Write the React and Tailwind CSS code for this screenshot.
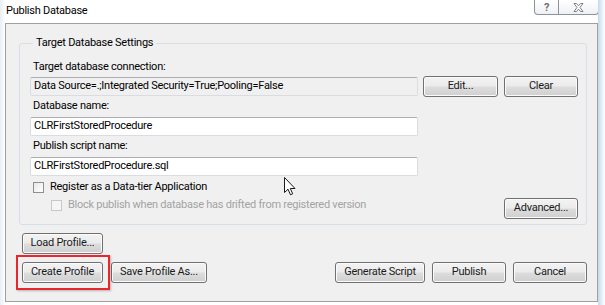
import React from 'react';

const Btn = ({ children, className = '' }) => (
  <div
    className={`flex items-center justify-center h-[21px] rounded-[3px] border border-[#707070] bg-[linear-gradient(#f3f3f3_0%,#ebebeb_48%,#dddddd_52%,#cfcfcf_100%)] shadow-[inset_0_0_0_1px_#fbfbfb] text-[11px] text-[#1b1b1b] ${className}`}
  >
    {children}
  </div>
);

const Field = ({ children, readOnly = false, className = '' }) => (
  <div
    className={`flex items-center h-[19px] pl-[3px] border border-[#d9dde3] border-t-[#abadb3] rounded-[2px] text-[11px] text-black ${readOnly ? 'bg-[#f0f0f0]' : 'bg-white'} ${className}`}
  >
    {children}
  </div>
);

const Check = ({ disabled = false }) => (
  <div
    className={`w-[11px] h-[11px] border ${disabled ? 'border-[#c8c8c8] bg-[#f5f5f5]' : 'border-[#8e8f8f] bg-[linear-gradient(135deg,#e8e8e8,#ffffff)]'}`}
  />
);

export default function App() {
  return (
    <div className="relative flex w-[605px] h-[305px] bg-white overflow-hidden font-['Roboto',sans-serif] tracking-[-0.25px]">
      {/* left margin */}
      <div className="w-[5px] shrink-0 bg-[linear-gradient(90deg,#e6eef7,#ffffff)]" />

      {/* dialog window */}
      <div className="flex flex-col w-[593px] h-[302px] shrink-0">
        {/* title bar */}
        <div className="flex justify-between h-[23px] shrink-0">
          <span className="pl-[1px] pt-[3px] text-[11px] leading-[16px] text-black">Publish Database</span>
          <div className="flex h-[15px] mr-[-1px]">
            <div className="flex items-center justify-center w-[25px] border border-t-0 border-[#8d929a] rounded-bl-[4px] bg-[linear-gradient(#ffffff,#eef1f4)] text-[11px] font-bold leading-none text-[#6d6d6d]">
              ?
            </div>
            <div className="flex items-center justify-center w-[40px] border border-t-0 border-l-0 border-[#8d929a] rounded-br-[4px] bg-[linear-gradient(#ffffff,#eef1f4)]">
              <svg width="11" height="9" viewBox="0 0 11 9">
                <path
                  d="M1 0.5 L3.5 0.5 L5.5 2.8 L7.5 0.5 L10 0.5 L7 4.5 L10 8.5 L7.5 8.5 L5.5 6.2 L3.5 8.5 L1 8.5 L4 4.5 Z"
                  fill="#ffffff"
                  stroke="#6f7378"
                  strokeWidth="0.9"
                />
              </svg>
            </div>
          </div>
        </div>

        {/* client area */}
        <div className="flex flex-col flex-1 border border-[#a0a0a0] bg-[#f0f0f0] pl-[13px] pr-[10px]">
          <fieldset className="mt-[11px] border border-[#d5dfe5] rounded-[3px] pl-[10px] pr-[8px] pb-[5px]">
            <legend className="ml-[3px] px-[3px] h-[16px] text-[11px] leading-[16px] text-black">
              Target Database Settings
            </legend>

            <div className="pt-[8px] pl-[3px] h-[24px] text-[11px] leading-[16px] text-black">Target database connection:</div>
            <div className="flex items-center h-[21px] mt-[1px]">
              <Field readOnly className="w-[388px]">
                Data Source=.;Integrated Security=True;Pooling=False
              </Field>
              <Btn className="w-[75px] ml-[5px]">Edit...</Btn>
              <Btn className="w-[74px] ml-[6px]">Clear</Btn>
            </div>

            <div className="mt-[1px] pl-[3px] h-[16px] text-[11px] leading-[16px] text-black">Database name:</div>
            <Field className="w-[388px] mt-[3px]">CLRFirstStoredProcedure</Field>

            <div className="mt-[2px] pl-[3px] h-[16px] text-[11px] leading-[16px] text-black">Publish script name:</div>
            <Field className="w-[388px] mt-[3px]">CLRFirstStoredProcedure.sql</Field>

            <div className="flex items-center gap-[6px] mt-[3px] pl-[3px] h-[16px]">
              <Check />
              <span className="text-[11px] leading-[16px] text-black">Register as a Data-tier Application</span>
            </div>

            <div className="flex justify-between items-start mt-[2px]">
              <div className="flex items-center gap-[6px] pl-[21px] h-[16px]">
                <Check disabled />
                <span className="text-[11px] leading-[16px] text-[#a3a3a3]">
                  Block publish when database has drifted from registered version
                </span>
              </div>
              <Btn className="w-[74px] mt-[1px]">Advanced...</Btn>
            </div>
          </fieldset>

          <Btn className="w-[81px] ml-[3px] mt-[8px]">Load Profile...</Btn>

          <div className="flex items-center mt-[8px] ml-[3px]">
            <div className="relative">
              <Btn className="w-[81px]">Create Profile</Btn>
              <div className="absolute left-[-6px] top-[-7px] w-[94px] h-[35px] border-2 border-[#e8262b] shadow-[1px_1px_2px_rgba(0,0,0,0.25)]" />
            </div>
            <Btn className="w-[96px] ml-[8px]">Save Profile As...</Btn>
            <Btn className="w-[90px] ml-auto">Generate Script</Btn>
            <Btn className="w-[74px] ml-[7px]">Publish</Btn>
            <Btn className="w-[74px] ml-[7px]">Cancel</Btn>
          </div>
        </div>
      </div>

      {/* aero glass edge on the right */}
      <div className="flex-1 bg-[linear-gradient(90deg,#c4d8ec,#e8f1fa_60%,#ffffff)]" />

      {/* mouse pointer */}
      <svg className="absolute left-[284px] top-[177px]" width="13" height="19" viewBox="0 0 13 19">
        <path
          d="M0.5 0.5 L0.5 15.5 L4 12.2 L6.5 17.8 L8.7 16.8 L6.3 11.5 L11 11.5 Z"
          fill="#ffffff"
          stroke="#1a1a1a"
          strokeWidth="1"
          strokeLinejoin="round"
        />
      </svg>
    </div>
  );
}
